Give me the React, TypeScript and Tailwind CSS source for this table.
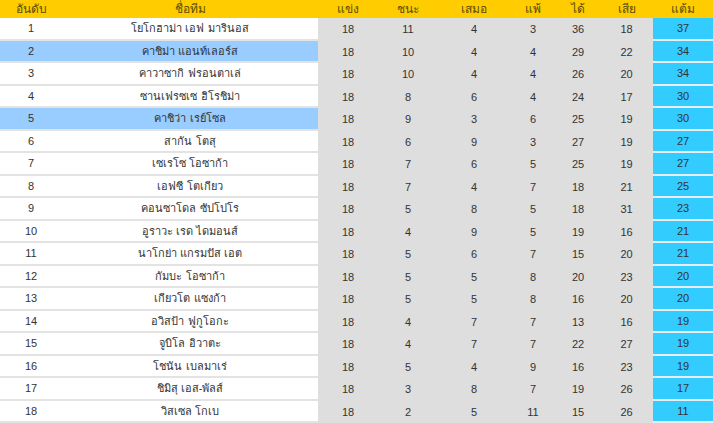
import React from "react";

type Row = [number, string, number, number, number, number, number, number, number];

const rows: Row[] = [
  [1, "โยโกฮาม่า เอฟ มารินอส", 18, 11, 4, 3, 36, 18, 37],
  [2, "คาชิม่า แอนท์เลอร์ส", 18, 10, 4, 4, 29, 22, 34],
  [3, "คาวาซากิ ฟรอนตาเล่", 18, 10, 4, 4, 26, 20, 34],
  [4, "ซานเฟรซเซ ฮิโรชิม่า", 18, 8, 6, 4, 24, 17, 30],
  [5, "คาชิว่า เรย์โซล", 18, 9, 3, 6, 25, 19, 30],
  [6, "สากัน โตสุ", 18, 6, 9, 3, 27, 19, 27],
  [7, "เซเรโซ โอซาก้า", 18, 7, 6, 5, 25, 19, 27],
  [8, "เอฟซี โตเกียว", 18, 7, 4, 7, 18, 21, 25],
  [9, "คอนซาโดล ซัปโปโร", 18, 5, 8, 5, 18, 31, 23],
  [10, "อูราวะ เรด ไดมอนส์", 18, 4, 9, 5, 19, 16, 21],
  [11, "นาโกย่า แกรมปัส เอต", 18, 5, 6, 7, 15, 20, 21],
  [12, "กัมบะ โอซาก้า", 18, 5, 5, 8, 20, 23, 20],
  [13, "เกียวโต แซงก้า", 18, 5, 5, 8, 16, 20, 20],
  [14, "อวิสป้า ฟูกูโอกะ", 18, 4, 7, 7, 13, 16, 19],
  [15, "จูบิโล อิวาตะ", 18, 4, 7, 7, 22, 27, 19],
  [16, "โชนัน เบลมาเร่", 18, 5, 4, 9, 16, 23, 19],
  [17, "ชิมิสุ เอส-พัลส์", 18, 3, 8, 7, 19, 26, 17],
  [18, "วิสเซล โกเบ", 18, 2, 5, 11, 15, 26, 11],
];

const headers = ["อันดับ", "ชื่อทีม", "แข่ง", "ชนะ", "เสมอ", "แพ้", "ได้", "เสีย", "แต้ม"];

const cols = "grid grid-cols-[62px_256px_60px_60px_72px_46px_44px_53px_60px]";

export default function App() {
  return (
    <div
      className="w-[713px] h-[423px] overflow-hidden bg-white text-[#333333] text-[11px]"
      style={{ fontFamily: '"Liberation Sans", Tahoma, "Noto Sans", sans-serif' }}
    >
      <div className={`${cols} h-[18px] bg-[#ffcc00] text-[#5c4d00] text-[12px]`}>
        {headers.map((h) => (
          <div key={h} className="flex items-center justify-center leading-none">
            {h}
          </div>
        ))}
      </div>
      {rows.map((r) => {
        const hl = r[0] === 2 || r[0] === 5;
        const side = hl ? "bg-[#99ccff]" : "bg-white";
        return (
          <div key={r[0]} className={`${cols} h-[22.5px]`}>
            <div className={`flex items-center justify-center border-b-2 border-[#e3e3e3] ${side}`}>{r[0]}</div>
            <div className={`flex items-center justify-center border-b-2 border-[#e3e3e3] ${side}`}>{r[1]}</div>
            {r.slice(2, 8).map((v, i) => (
              <div key={i} className="flex items-center justify-center bg-[#dedede]">
                {v}
              </div>
            ))}
            <div className="flex items-center justify-center bg-[#33ccff] border-b-2 border-[#e8eef2]">{r[8]}</div>
          </div>
        );
      })}
    </div>
  );
}
